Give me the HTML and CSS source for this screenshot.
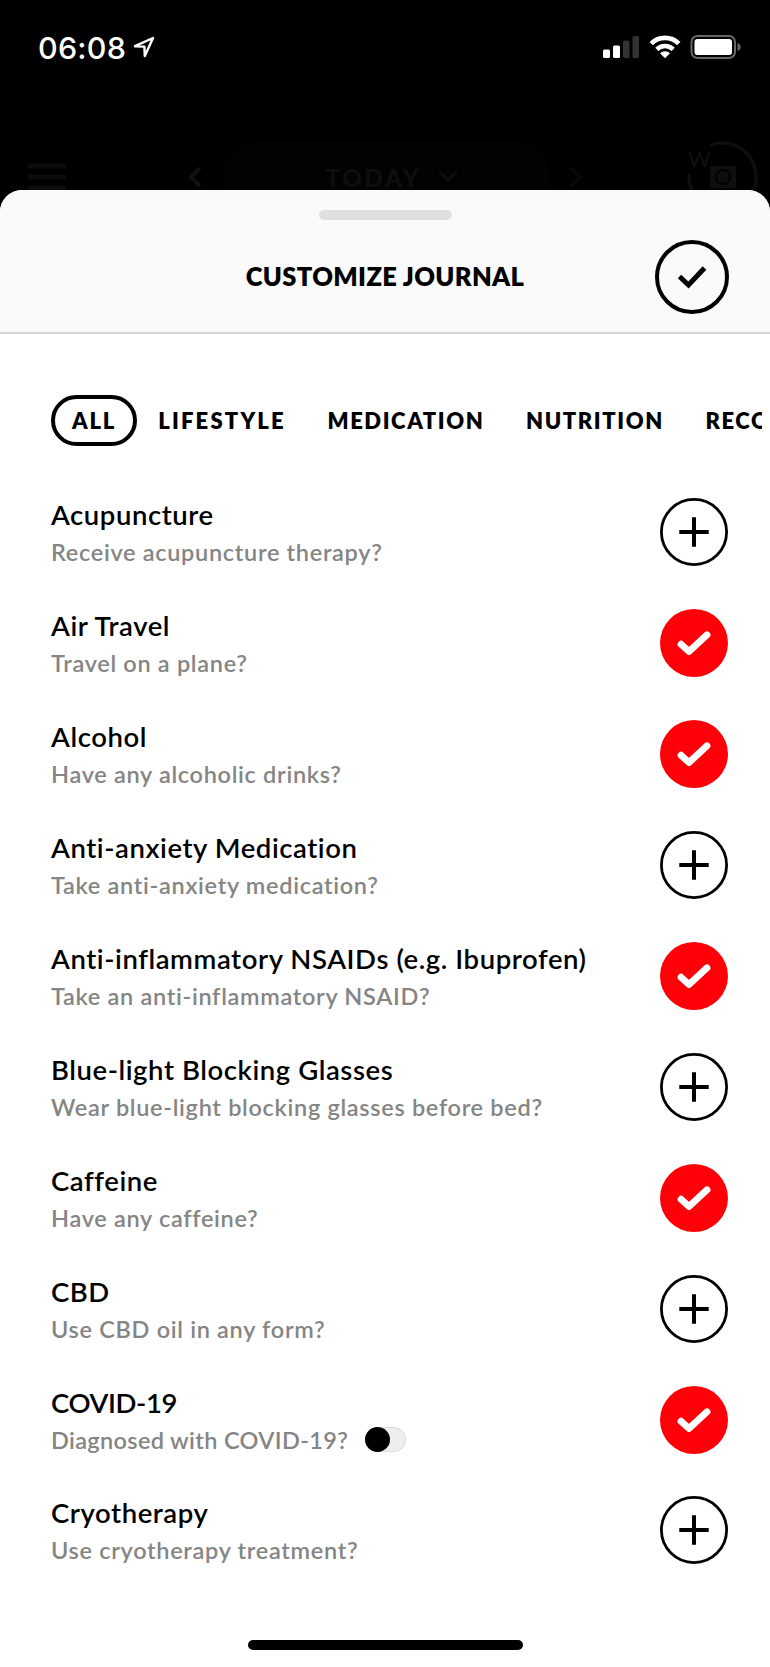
FILE: index.html
```html
<!DOCTYPE html>
<html lang="en">
<head>
    <meta charset="UTF-8">
    <meta name="viewport" content="width=device-width, initial-scale=1.0">
    <title>Customize Journal</title>
    <link rel="stylesheet" href="styles.css">
</head>
<body>
    <!-- Shared icons -->
    <svg class="icon-defs" aria-hidden="true">
        <symbol id="icon-plus" viewBox="0 0 68 68">
            <circle cx="34" cy="34" r="32.6" fill="none" stroke="#000" stroke-width="2.8"/>
            <path d="M34 19.3v29.4M19.3 34h29.4" stroke="#000" stroke-width="4"/>
        </symbol>
        <symbol id="icon-checked" viewBox="0 0 68 68">
            <circle cx="34" cy="34" r="34" fill="#ff0008"/>
            <path d="M21 35.2l8 7.4 18-16.8" fill="none" stroke="#fff" stroke-width="6.8" stroke-linecap="round" stroke-linejoin="round"/>
        </symbol>
    </svg>

    <div class="status-bar">
        <span class="time">06:08</span>
        <svg class="location" width="22" height="22" viewBox="0 0 22 22">
            <path d="M2 10.2L20 2l-8.2 18-.4-9.4z" fill="none" stroke="#fff" stroke-width="2.4" stroke-linejoin="round"/>
        </svg>
        <div class="status-icons">
            <svg width="37" height="24" viewBox="0 0 37 24">
                <rect x="0" y="14.5" width="7" height="8.5" rx="1.5" fill="#fff"/>
                <rect x="10" y="10.5" width="7" height="12.5" rx="1.5" fill="#fff"/>
                <rect x="20" y="5.5" width="6.5" height="17.5" rx="1.5" fill="#333"/>
                <rect x="29.5" y="1" width="6.5" height="22" rx="1.5" fill="#333"/>
            </svg>
            <svg width="32" height="24" viewBox="0 0 32 24">
                <path d="M2.2 8.6a19.5 19.5 0 0 1 27.6 0" fill="none" stroke="#fff" stroke-width="4.8"/>
                <path d="M7.8 14.4a11.6 11.6 0 0 1 16.4 0" fill="none" stroke="#fff" stroke-width="4.4"/>
                <path d="M16 23.3l-5-5a7.2 7.2 0 0 1 10 0z" fill="#fff"/>
            </svg>
            <svg width="51" height="24" viewBox="0 0 51 24">
                <rect x="1.5" y="1" width="43.5" height="22" rx="6" fill="none" stroke="#666" stroke-width="2"/>
                <rect x="4.5" y="4" width="37.5" height="16" rx="3" fill="#fff"/>
                <path d="M47.5 8q3.2 1.2 3.2 4t-3.2 4z" fill="#666"/>
            </svg>
        </div>
    </div>

    <div class="nav">
        <svg class="menu" width="40" height="28" viewBox="0 0 40 28">
            <path d="M1 3h38M1 14h38M1 25h38" stroke="#0c0c0c" stroke-width="5"/>
        </svg>
        <svg class="prev" width="16" height="24" viewBox="0 0 16 24">
            <path d="M13 3L4 12l9 9" fill="none" stroke="#101010" stroke-width="4"/>
        </svg>
        <div class="day">
            <span>TODAY</span>
            <svg width="20" height="14" viewBox="0 0 20 14">
                <path d="M2 2l8 8 8-8" fill="none" stroke="#0d0d0d" stroke-width="3.4"/>
            </svg>
        </div>
        <svg class="next" width="16" height="24" viewBox="0 0 16 24">
            <path d="M3 3l9 9-9 9" fill="none" stroke="#080808" stroke-width="4"/>
        </svg>
        <svg class="avatar" width="72" height="72" viewBox="0 0 72 72">
            <path d="M24 4.5a33.5 33.5 0 1 1-20.8 28" fill="none" stroke="#0e0e0e" stroke-width="3.4"/>
            <text x="2" y="26" class="initial">W</text>
            <path d="M24 25h26v22H24z" fill="#0e0e0e"/>
            <circle cx="37" cy="36" r="7" fill="none" stroke="#000" stroke-width="2"/>
        </svg>
    </div>

    <div class="sheet">
        <div class="sheet-header">
            <div class="handle"></div>
            <div class="title-row">
                <h1>CUSTOMIZE JOURNAL</h1>
                <svg class="done" width="74" height="74" viewBox="0 0 74 74">
                    <circle cx="37" cy="37" r="35" fill="none" stroke="#000" stroke-width="4"/>
                    <path d="M24.5 36.5l9 8.5L49.5 28" fill="none" stroke="#000" stroke-width="5"/>
                </svg>
            </div>
        </div>

        <div class="tabs">
            <span class="tab active">ALL</span>
            <span class="tab">LIFESTYLE</span>
            <span class="tab">MEDICATION</span>
            <span class="tab">NUTRITION</span>
            <span class="tab">RECOVERY</span>
        </div>

        <div class="list">
            <div class="item">
                <div class="text">
                    <div class="name">Acupuncture</div>
                    <div class="question">Receive acupuncture therapy?</div>
                </div>
                <svg class="toggle"><use href="#icon-plus"/></svg>
            </div>
            <div class="item">
                <div class="text">
                    <div class="name">Air Travel</div>
                    <div class="question">Travel on a plane?</div>
                </div>
                <svg class="toggle"><use href="#icon-checked"/></svg>
            </div>
            <div class="item">
                <div class="text">
                    <div class="name">Alcohol</div>
                    <div class="question">Have any alcoholic drinks?</div>
                </div>
                <svg class="toggle"><use href="#icon-checked"/></svg>
            </div>
            <div class="item">
                <div class="text">
                    <div class="name">Anti-anxiety Medication</div>
                    <div class="question">Take anti-anxiety medication?</div>
                </div>
                <svg class="toggle"><use href="#icon-plus"/></svg>
            </div>
            <div class="item">
                <div class="text">
                    <div class="name">Anti-inflammatory NSAIDs (e.g. Ibuprofen)</div>
                    <div class="question">Take an anti-inflammatory NSAID?</div>
                </div>
                <svg class="toggle"><use href="#icon-checked"/></svg>
            </div>
            <div class="item">
                <div class="text">
                    <div class="name">Blue-light Blocking Glasses</div>
                    <div class="question">Wear blue-light blocking glasses before bed?</div>
                </div>
                <svg class="toggle"><use href="#icon-plus"/></svg>
            </div>
            <div class="item">
                <div class="text">
                    <div class="name">Caffeine</div>
                    <div class="question">Have any caffeine?</div>
                </div>
                <svg class="toggle"><use href="#icon-checked"/></svg>
            </div>
            <div class="item">
                <div class="text">
                    <div class="name">CBD</div>
                    <div class="question">Use CBD oil in any form?</div>
                </div>
                <svg class="toggle"><use href="#icon-plus"/></svg>
            </div>
            <div class="item tight">
                <div class="text">
                    <div class="name">COVID-19</div>
                    <div class="question">Diagnosed with COVID-19? <span class="switch"></span></div>
                </div>
                <svg class="toggle"><use href="#icon-checked"/></svg>
            </div>
            <div class="item">
                <div class="text">
                    <div class="name">Cryotherapy</div>
                    <div class="question">Use cryotherapy treatment?</div>
                </div>
                <svg class="toggle"><use href="#icon-plus"/></svg>
            </div>
        </div>

        <div class="home-bar"></div>
    </div>
</body>
</html>
```
FILE: styles.css
```css
* {
    box-sizing: border-box;
}

body {
    margin: 0;
    height: 1667px;
    overflow: hidden;
    background: #000;
    color: #000;
    font-family: Lato, "Open Sans", sans-serif;
}

svg {
    display: block;
    flex-shrink: 0;
}

.icon-defs {
    display: none;
}

/* Status bar */
.status-bar {
    display: flex;
    align-items: center;
    height: 130px;
    padding: 0 29px 36px 38px;
    color: #fff;
}

.time {
    width: 95px;
    font-family: Inter, sans-serif;
    font-size: 30.5px;
    font-weight: 500;
    letter-spacing: 0.2px;
    white-space: nowrap;
}

.status-icons {
    display: flex;
    gap: 9px;
    margin-left: auto;
}

/* Dimmed screen behind the sheet */
.nav {
    display: flex;
    align-items: center;
    height: 94px;
    padding: 0 12px 0 27px;
}

.prev {
    margin-left: 120px;
}

.day {
    display: flex;
    align-items: center;
    justify-content: center;
    gap: 17px;
    width: 328px;
    height: 72px;
    padding-left: 12px;
    margin-left: 19px;
    border-radius: 36px;
    background: #020202;
    color: #0e0e0e;
    font-size: 24px;
    font-weight: 900;
    letter-spacing: 2.8px;
}

.next {
    margin-left: 18px;
}

.avatar {
    margin-left: auto;
}

.initial {
    font-size: 22px;
    fill: #101010;
}

/* Bottom sheet */
.sheet {
    position: relative;
    display: flex;
    flex-direction: column;
    height: 1477px;
    margin-top: -34px;
    border-radius: 22px 22px 0 0;
    background: #fff;
    overflow: hidden;
}

.sheet-header {
    height: 144px;
    padding-top: 20px;
    border-bottom: 2px solid #d4d4d4;
    background: #fafafa;
}

.handle {
    width: 133px;
    height: 10px;
    margin: 0 auto;
    border-radius: 5px;
    background: #e0e0e0;
}

.title-row {
    display: grid;
    grid-template-columns: 1fr auto 1fr;
    align-items: center;
    padding: 0 41px;
    margin-top: 19.5px;
}

.title-row h1 {
    grid-column: 2;
    margin: 0;
    padding-bottom: 2px;
    font-size: 25.5px;
    font-weight: 800;
    letter-spacing: 0.35px;
}

.done {
    justify-self: end;
}

.tabs {
    display: flex;
    height: 51px;
    margin: 61px 8px 0 51px;
    overflow: hidden;
}

.tab {
    flex-shrink: 0;
    padding: 0 20.5px 0 21px;
    border-radius: 26px;
    font-size: 22px;
    font-weight: 800;
    line-height: 51px;
    letter-spacing: 1.6px;
}

.tab.active {
    padding: 0 17px;
    border: 4px solid #000;
    line-height: 43px;
    letter-spacing: 1.8px;
}

.tab.active + .tab {
    letter-spacing: 2.2px;
}

.list {
    padding: 31px 42px 0 51px;
}

.item {
    display: flex;
    justify-content: space-between;
    align-items: center;
    height: 110.9px;
}

.text {
    padding-top: 4px;
    font-variant-ligatures: none;
}

.name {
    font-size: 27.5px;
    font-weight: 600;
    line-height: 36px;
    letter-spacing: 0.57px;
    white-space: nowrap;
}

.question {
    display: flex;
    align-items: center;
    color: #858585;
    font-size: 23.5px;
    font-weight: 600;
    line-height: 38px;
    letter-spacing: 0.69px;
    white-space: nowrap;
}

.tight .name {
    letter-spacing: -0.4px;
}

.tight .question {
    letter-spacing: 0.35px;
}

.toggle {
    width: 68px;
    height: 68px;
}

.switch {
    width: 41px;
    height: 25px;
    margin-left: 17px;
    border-radius: 13px;
    background: #eee;
    box-shadow: inset 0 0 0 1px #dcdcdc;
}

.switch::before {
    content: "";
    display: block;
    width: 25px;
    height: 25px;
    border-radius: 50%;
    background: #000;
}

.home-bar {
    width: 275px;
    height: 10px;
    margin: auto auto 17px;
    border-radius: 5px;
    background: #000;
}
```
